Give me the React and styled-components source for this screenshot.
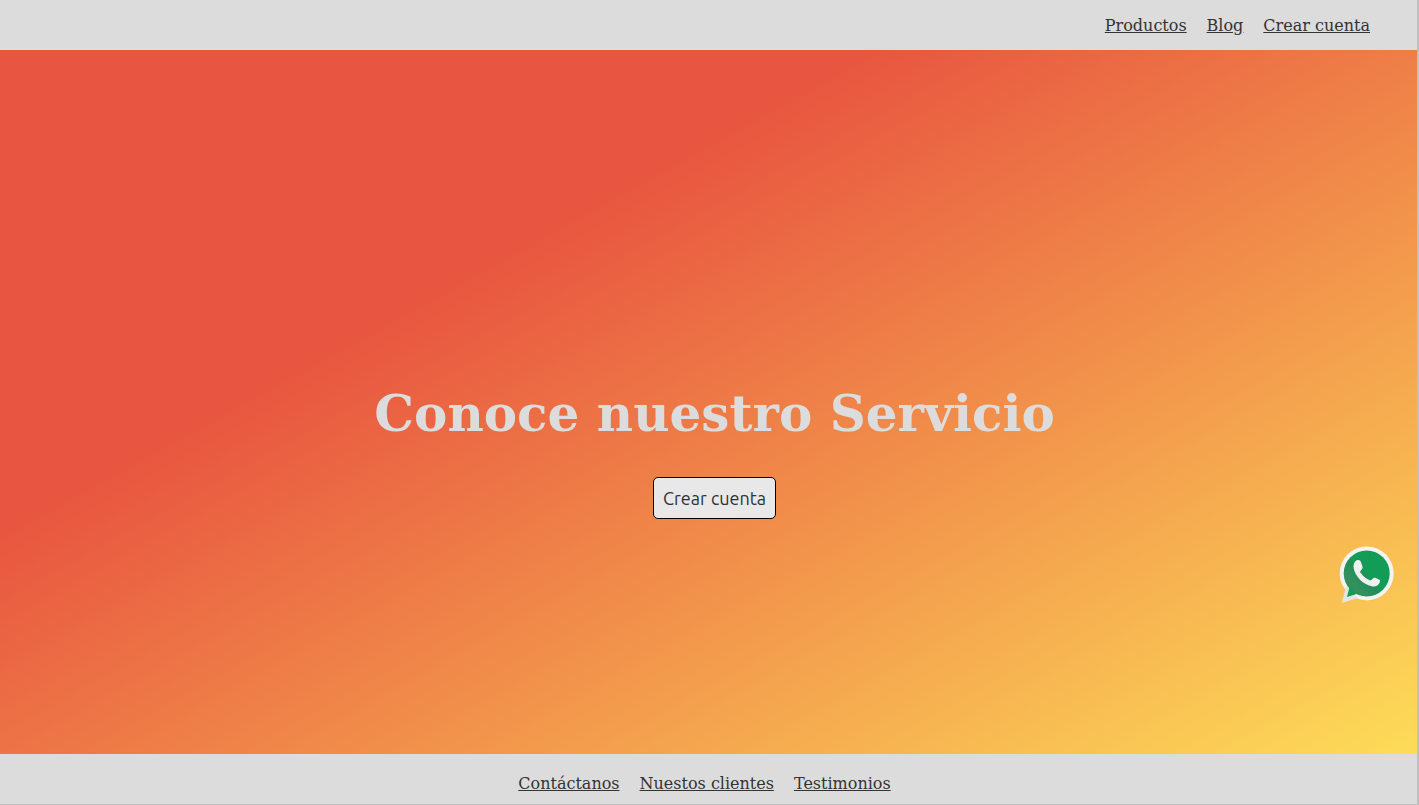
import React from 'react';
import styled, { createGlobalStyle } from 'styled-components';

const Global = createGlobalStyle`
  * { box-sizing: border-box; }
  body { margin: 0; font-family: "DejaVu Serif", serif; font-size: 16px; }
`;
const Page = styled.div`
  min-height: 100vh;
  display: flex;
  flex-direction: column;
  background: #dcdcdc;
  border-right: 2px solid #c0c0c0;
  border-bottom: 1px solid #c0c0c0;
`;
const Nav = styled.nav`
  display: flex;
  align-items: center;
  justify-content: ${p => p.$align};
  gap: 20px;
  height: 50px;
  padding: ${p => p.$padding};
  background: #dcdcdc;
`;
const NavLink = styled.a`
  color: #333;
  line-height: 20px;
`;
const Hero = styled.main`
  flex: 1;
  display: flex;
  flex-direction: column;
  align-items: center;
  justify-content: center;
  gap: 34px;
  padding: 100px 0 0 12px;
  background: linear-gradient(151deg, #e85540 32%, #fddc58 100%);
`;
const Title = styled.h1`
  margin: 0;
  color: #dcdcdc;
  font-size: 50px;
  line-height: 58px;
  text-align: center;
`;
const Button = styled.button`
  height: 42px;
  padding: 0 9px;
  border: 1px solid #000;
  border-radius: 5px;
  background: #e8e8e8;
  color: #2b3338;
  font-family: Ubuntu, "Noto Sans", sans-serif;
  font-size: 18px;
`;
const ChatLink = styled.a`
  position: fixed;
  right: 24px;
  bottom: 200px;
  width: 56px;
  height: 60px;
  svg { display: block; }
`;

export default function App() {
  return (
    <Page>
      <Global />
      <Nav $align="flex-end" $padding="2px 47px 0 0">
        <NavLink href="#productos">Productos</NavLink>
        <NavLink href="#blog">Blog</NavLink>
        <NavLink href="#cuenta">Crear cuenta</NavLink>
      </Nav>
      <Hero>
        <Title>Conoce nuestro Servicio</Title>
        <Button type="button">Crear cuenta</Button>
      </Hero>
      <Nav as="footer" $align="center" $padding="10px 8px 0 0">
        <NavLink href="#contacto">Contáctanos</NavLink>
        <NavLink href="#clientes">Nuestos clientes</NavLink>
        <NavLink href="#testimonios">Testimonios</NavLink>
      </Nav>
      <ChatLink href="#whatsapp" aria-label="WhatsApp">
        <svg width="56" height="60" viewBox="0 0 56 60">
          <defs>
            <linearGradient id="bubble" gradientUnits="userSpaceOnUse" x1="8" y1="48" x2="36" y2="22">
              <stop offset="0" stopColor="#159b59" />
              <stop offset="0.25" stopColor="#35905f" />
              <stop offset="0.6" stopColor="#238d59" />
              <stop offset="0.75" stopColor="#129c58" />
            </linearGradient>
          </defs>
          <circle cx="27.7" cy="28.4" r="27" fill="#f3f3f2" />
          <path d="M3 58 L7 41 L19 53 Z" fill="#e5e5e5" />
          <circle cx="27.7" cy="28.4" r="23" fill="url(#bubble)" />
          <path d="M8 52 L10.500 42 L17.500 49 Z" fill="#159b59" />
          <path d="M18.800 15 C20.300 14.700 21.300 15.400 21.800 16.800 L23.500 21.400 C24 23 23 24 21.500 25.900 C20.900 26.700 21.200 27.300 21.800 28.100 C24 31.400 27.100 33.900 30.900 35.200 C31.800 35.500 32.400 35.200 33.200 34.300 C34.500 32.700 35.200 32.400 36.700 33 L40 34.600 C41.400 35.300 41.200 36 40.600 37.700 C39.500 40.700 36 41.900 32.700 41.200 C24 39.400 16.200 31.500 14.700 23.200 C14 19 15.700 15.600 18.800 15 Z" fill="#f0f0f0" />
        </svg>
      </ChatLink>
    </Page>
  );
}
